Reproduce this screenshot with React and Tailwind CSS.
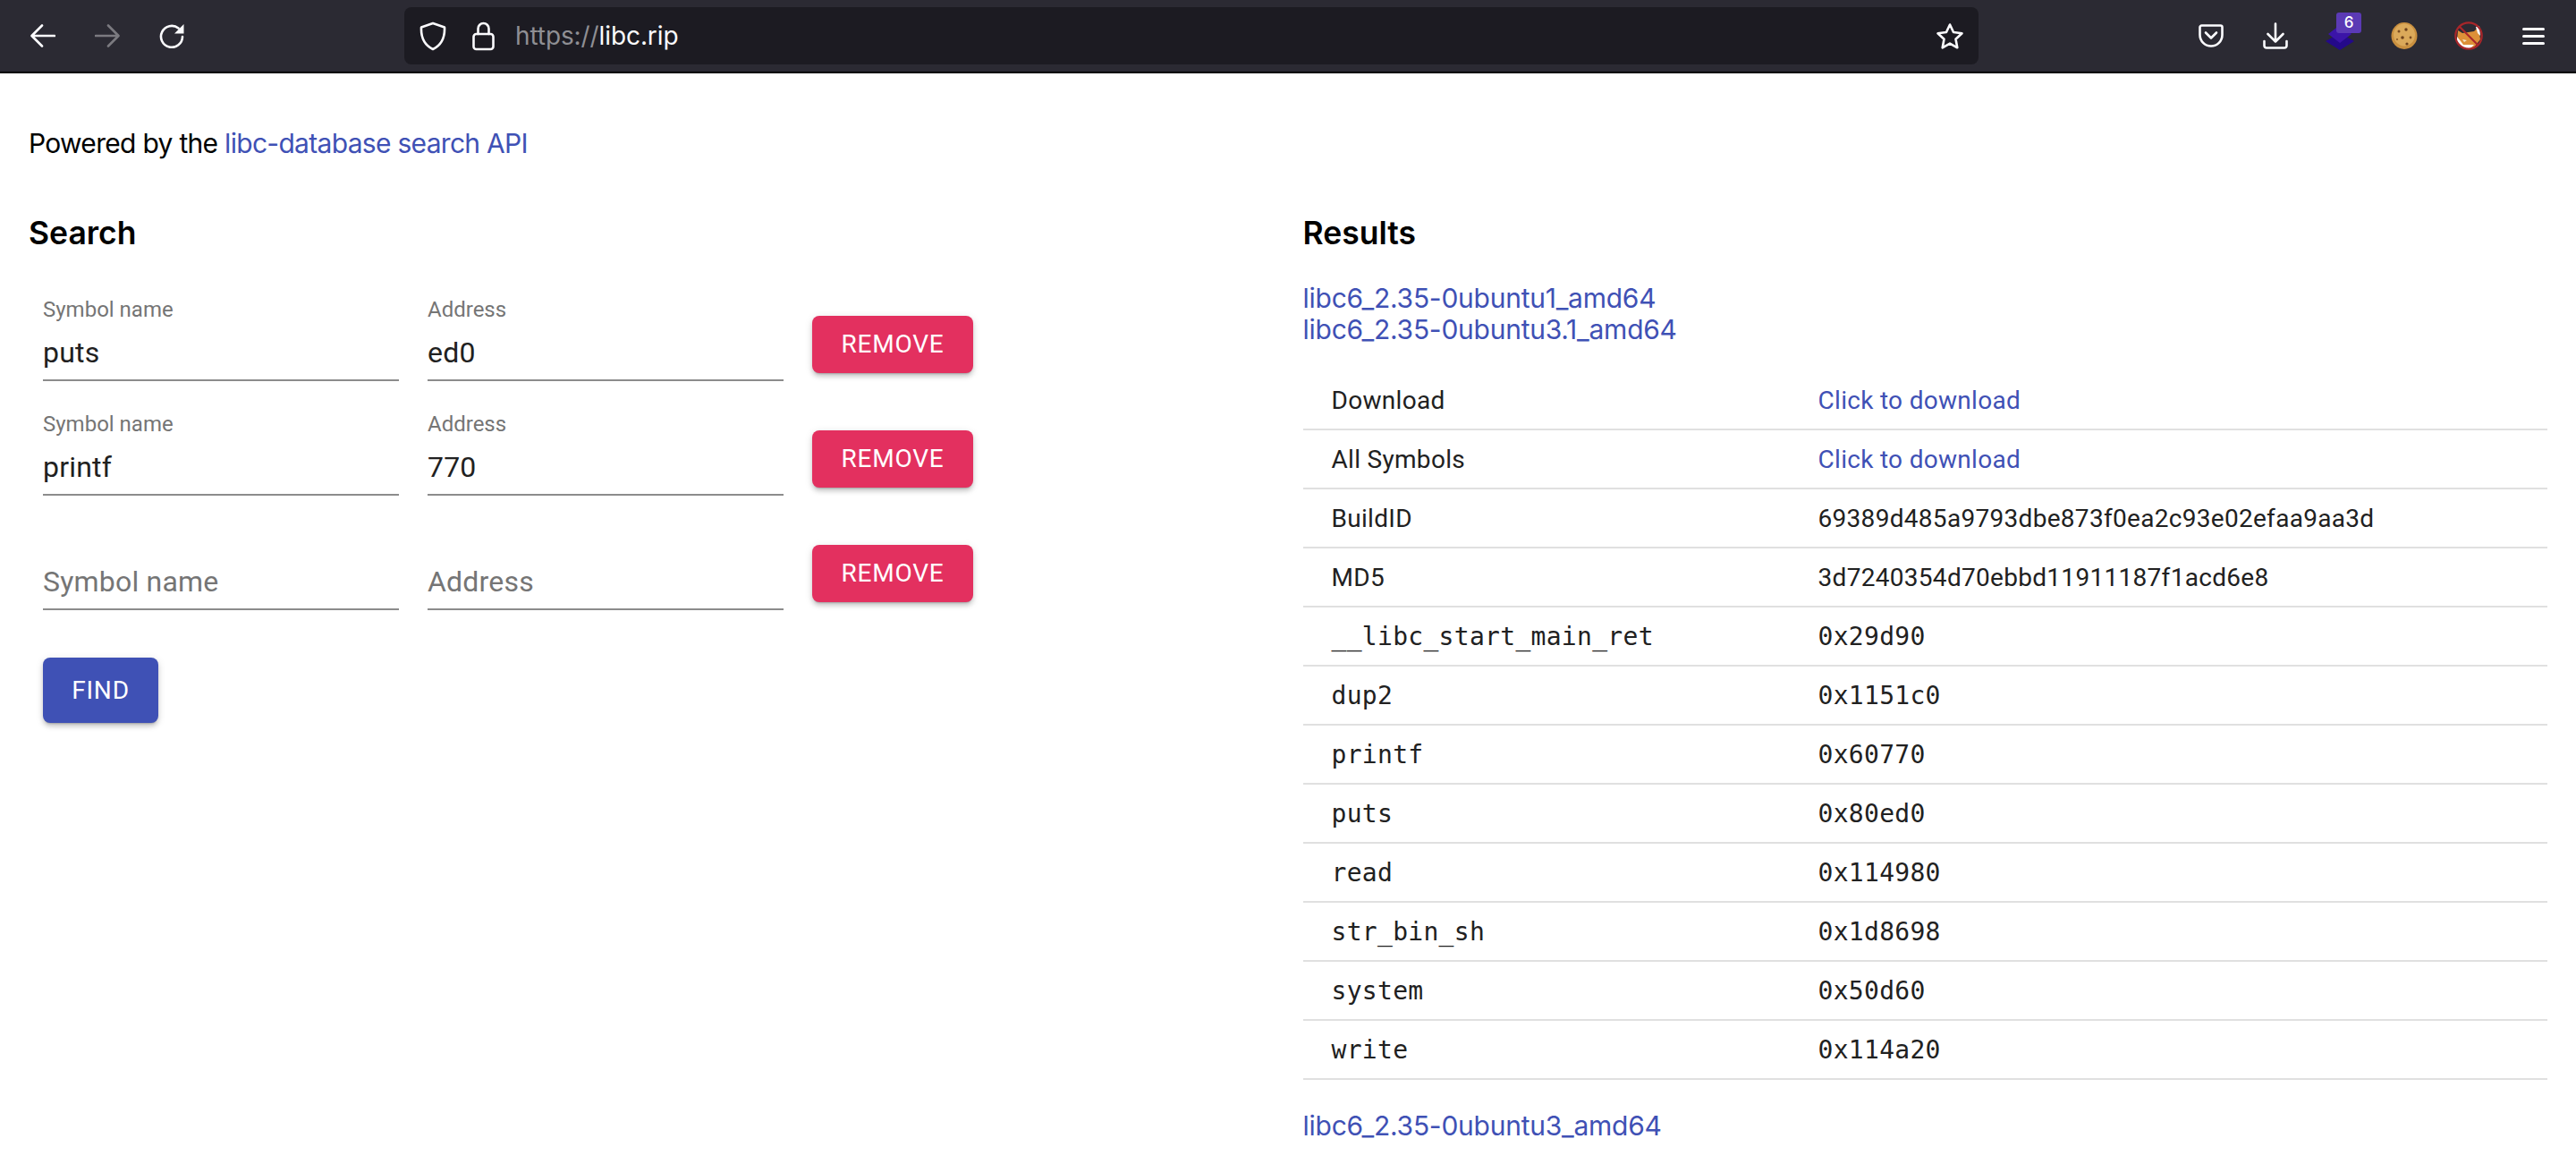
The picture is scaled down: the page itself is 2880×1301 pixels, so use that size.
import React from "react";

const ROBOTO = "font-['Roboto',sans-serif]";
const SYSTEM = "font-['Inter',sans-serif]";

const rows = [
  { name: "Download", value: "Click to download", link: true },
  { name: "All Symbols", value: "Click to download", link: true },
  { name: "BuildID", value: "69389d485a9793dbe873f0ea2c93e02efaa9aa3d" },
  { name: "MD5", value: "3d7240354d70ebbd11911187f1acd6e8" },
  { name: "__libc_start_main_ret", value: "0x29d90", mono: true },
  { name: "dup2", value: "0x1151c0", mono: true },
  { name: "printf", value: "0x60770", mono: true },
  { name: "puts", value: "0x80ed0", mono: true },
  { name: "read", value: "0x114980", mono: true },
  { name: "str_bin_sh", value: "0x1d8698", mono: true },
  { name: "system", value: "0x50d60", mono: true },
  { name: "write", value: "0x114a20", mono: true },
];

const Stroke = ({ w, h, vb, className = "", children, width = 2.6 }) => (
  <svg
    viewBox={vb}
    width={w}
    height={h}
    fill="none"
    stroke="currentColor"
    strokeWidth={width}
    strokeLinecap="round"
    strokeLinejoin="round"
    className={`shrink-0 ${className}`}
  >
    {children}
  </svg>
);

const Toolbar = () => (
  <div className="h-[82px] bg-[#2b2a33] border-b-2 border-black flex items-center pl-[34px] text-[#fbfbfe]">
    <Stroke w={28} h={26} vb="0 0 28 26">
      <path d="M27 13H2M13 1.5 1.5 13 13 24.5" />
    </Stroke>
    <Stroke w={28} h={26} vb="0 0 28 26" className="ml-[44px] text-[#7b7a80]">
      <path d="M1 13h25M15 1.5 26.500 13 15 24.500" />
    </Stroke>
    <svg viewBox="0 0 28 28" width={28} height={28} className="ml-[44px] shrink-0">
      <path d="M21.500 5.500A12 12 0 1 0 26 15" fill="none" stroke="currentColor" strokeWidth="2.600" strokeLinecap="round" />
      <path d="M27.500 1v10.500H17z" fill="currentColor" />
    </svg>
    <div className="ml-[246px] w-[1760px] h-[64px] rounded-[8px] bg-[#1c1b22] flex items-center pl-[17px] pr-[16px]">
      <Stroke w={30} h={33} vb="0 0 30 33">
        <path d="M15 2 28 6.500c.5 11-3 19.500-13 24.500C5 26 1.500 17.500 2 6.500z" />
      </Stroke>
      <Stroke w={25} h={33} vb="0 0 25 33" className="ml-[29px]">
        <path d="M6.500 14V8a6 6 0 0 1 12 0v6" />
        <rect x="1.500" y="14" width="22" height="17" rx="3" />
      </Stroke>
      <div className={`ml-[23px] ${SYSTEM} text-[28px] leading-[40px] tracking-[-0.1px] text-[#8f8f94]`}>
        https://<span className="text-[#fbfbfe]">libc.rip</span>
      </div>
      <Stroke w={32} h={31} vb="0 0 32 31" className="ml-auto">
        <path d="M16 2.500 20 11l9.500 1.300-7 6.500 1.800 9.500L16 23.600 7.700 28.300 9.500 18.800l-7-6.500L12 11z" />
      </Stroke>
    </div>
    <Stroke w={28} h={26} vb="0 0 28 26" className="ml-[246px]">
      <path d="M3.500 1.500h21a2 2 0 0 1 2 2V12a12.500 12.500 0 0 1-25 0V3.500a2 2 0 0 1 2-2z" />
      <path d="m8 9.500 6 6 6-6" />
    </Stroke>
    <Stroke w={28} h={30} vb="0 0 28 30" className="ml-[44px]">
      <path d="M14 1.500v20M5.500 13l8.500 8.500L22.500 13M1.500 21v5a2.500 2.500 0 0 0 2.500 2.500h20a2.500 2.500 0 0 0 2.500-2.500v-5" />
    </Stroke>
    <div className="ml-[42px] mt-[4px] w-[32px] h-[28px] relative shrink-0">
      <svg viewBox="0 0 32 28" width={32} height={28}>
        <path d="M16 9 32 18 16 28 0 18z" fill="#24098a" />
        <path d="M16 0 29 10 16 20 3 10z" fill="#3b14a8" />
      </svg>
      <div className={`absolute left-[12px] top-[-14px] w-[28px] h-[23px] rounded-[3px] bg-[#5b3ab5] text-white text-[17px] leading-[23px] text-center ${SYSTEM} font-medium`}>
        6
      </div>
    </div>
    <svg viewBox="0 0 30 30" width={30} height={30} className="ml-[41px] shrink-0">
      <ellipse cx="15" cy="15" rx="14.500" ry="15" fill="#c98f3f" />
      <ellipse cx="15" cy="14" rx="12" ry="12.500" fill="#dba95a" />
      <circle cx="17" cy="8" r="1.700" fill="#6e421c" />
      <circle cx="9" cy="10" r="1.500" fill="#7a4c22" />
      <circle cx="13" cy="17" r="1.800" fill="#6e421c" />
      <circle cx="22" cy="17" r="1.400" fill="#7a4c22" />
      <circle cx="18" cy="24" r="1.600" fill="#6e421c" />
      <circle cx="7" cy="19" r="1.100" fill="#8a5a2a" />
    </svg>
    <svg viewBox="0 0 32 32" width={32} height={32} className="ml-[41px] shrink-0">
      <path d="M4 10 9 13 22 11 27 6 29 20 22 29H10L3 21z" fill="#dd9038" />
      <path d="M3 17 7 22 10 26 22 26 18 30H10L3 22zM24 6 28 5 29 16 26 13z" fill="#fff" />
      <path d="M9 20l5 1-3 2z" fill="#f4e7c8" />
      <circle cx="16" cy="16" r="14.700" fill="none" stroke="#a8262a" strokeWidth="2.200" />
      <path d="M6 6 26 26" stroke="#a8262a" strokeWidth="2.200" />
    </svg>
    <div className="ml-[44px] w-[25px] flex flex-col gap-[5px] shrink-0">
      <div className="h-[3px] rounded-full bg-current" />
      <div className="h-[3px] rounded-full bg-current" />
      <div className="h-[3px] rounded-full bg-current" />
    </div>
  </div>
);

const Field = ({ label, value, placeholder }) => (
  <div className="w-[398px] h-[96px] border-b-2 border-[#8c8c8c] flex flex-col justify-end">
    {label && <div className="text-[24px] leading-[24px] text-[#757575] mb-[13px]">{label}</div>}
    <div className={`text-[32px] leading-[46px] tracking-[0.2px] mb-[7px] ${value ? "text-[#212121]" : "text-[#757575]"}`}>
      {value || placeholder}
    </div>
  </div>
);

const ActionButton = ({ color, className, children }) => (
  <button
    className={`rounded-[8px] text-white text-[28px] tracking-[0.8px] uppercase shadow-[0_3px_2px_-2px_rgba(0,0,0,0.2),0_4px_5px_0_rgba(0,0,0,0.14),0_2px_10px_0_rgba(0,0,0,0.12)] ${color} ${className}`}
  >
    {children}
  </button>
);

const SearchRow = ({ symbol, address, filled }) => (
  <div className="flex gap-[32px] h-[96px] mb-[32px] items-start">
    <Field label={filled ? "Symbol name" : null} value={symbol} placeholder="Symbol name" />
    <Field label={filled ? "Address" : null} value={address} placeholder="Address" />
    <ActionButton color="bg-[#e3305f]" className="w-[180px] h-[64px] mt-[23px]">
      Remove
    </ActionButton>
  </div>
);

const ResultRow = ({ row }) => {
  const valueClass = row.link ? "text-[#3f51b5]" : row.mono ? "font-['DejaVu_Sans_Mono',monospace]" : "";
  const nameClass = row.mono ? "font-['DejaVu_Sans_Mono',monospace]" : "";
  return (
    <div className="h-[66px] pt-[2px] border-b-2 border-[#e0e0e0] flex items-center pl-[32px] text-[28px] tracking-[0.3px] text-[#212121]">
      <div className={`w-[544px] shrink-0 ${nameClass}`}>{row.name}</div>
      <div className={valueClass}>{row.value}</div>
    </div>
  );
};

const App = () => {
  return (
    <div className={`h-[1301px] overflow-hidden bg-white ${ROBOTO}`}>
      <Toolbar />
      <div className="px-[32px] pt-[54px]">
        <p className={`${SYSTEM} text-[30px] leading-[48px] tracking-[-0.7px] text-black`}>
          Powered by the <a className="text-[#3f51b5]">libc-database search API</a>
        </p>
        <div className="grid grid-cols-2 gap-x-[33px] mt-[45px]">
          <div>
            <h2 className={`${SYSTEM} text-[35.5px] leading-[64px] font-semibold text-black`}>Search</h2>
            <div className="pl-[16px] mt-[37px]">
              <SearchRow symbol="puts" address="ed0" filled />
              <SearchRow symbol="printf" address="770" filled />
              <SearchRow />
              <ActionButton color="bg-[#3f51b5]" className="w-[129px] h-[73px] mt-[21px]">
                Find
              </ActionButton>
            </div>
          </div>
          <div>
            <h2 className={`${SYSTEM} text-[35.5px] leading-[64px] font-semibold text-black`}>Results</h2>
            <div className={`mt-[23px] ${SYSTEM} text-[30px] leading-[35px] tracking-[-0.25px] text-[#3f51b5]`}>
              <div>libc6_2.35-0ubuntu1_amd64</div>
              <div>libc6_2.35-0ubuntu3.1_amd64</div>
            </div>
            <div className="mt-[29px]">
              {rows.map((row) => (
                <ResultRow key={row.name} row={row} />
              ))}
            </div>
            <div className={`mt-[34px] ${SYSTEM} text-[30px] leading-[35px] tracking-[-0.25px] text-[#3f51b5]`}>
              libc6_2.35-0ubuntu3_amd64
            </div>
          </div>
        </div>
      </div>
    </div>
  );
};

export default App;
